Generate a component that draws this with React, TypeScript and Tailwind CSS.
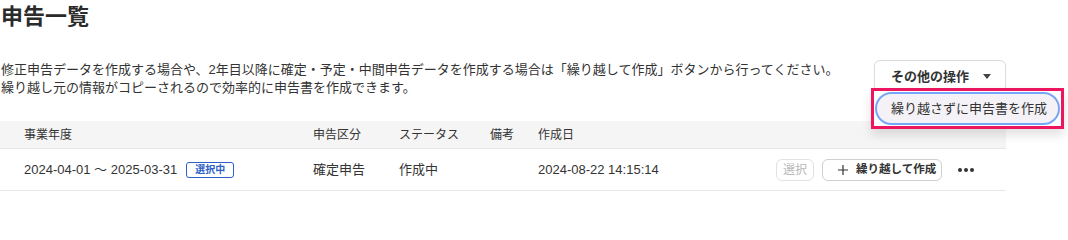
import React from "react";

const font = { fontFamily: '"Liberation Sans", "Noto Sans CJK JP", sans-serif' };

export default function App() {
  return (
    <div className="w-[1068px] h-[233px] bg-white text-[#333333] overflow-hidden" style={font}>
      <div className="w-[1006px]">
        <h1 className="text-[22px] leading-[33px] font-bold text-[#2b2b2b] pl-[1px]">申告一覧</h1>

        <div className="mt-[27px] flex items-start justify-between">
          <p className="text-[13px] leading-[18px] mt-[1px] pl-[1px]">
            修正申告データを作成する場合や、2年目以降に確定・予定・中間申告データを作成する場合は「繰り越して作成」ボタンから行ってください。
            <br />
            繰り越し元の情報がコピーされるので効率的に申告書を作成できます。
          </p>
          <div className="relative">
            <button className="h-[33px] w-[132px] pl-[16px] pr-[14px] flex items-center justify-between rounded-md border border-[#dcdcdc] bg-white text-[13px] font-bold shadow-[0_1px_2px_rgba(0,0,0,0.06)]">
              <span>その他の操作</span>
              <svg width="8" height="5" viewBox="0 0 8 5" className="ml-2">
                <path d="M0 0 L8 0 L4 5 Z" fill="#444" />
              </svg>
            </button>
            <div className="absolute left-[-3px] top-[28px] w-[193px] h-[41px] border-[3px] border-[#ee1560] bg-white p-[1px] shadow-[0_6px_10px_rgba(0,0,0,0.12)] z-10">
              <div className="h-full w-full rounded-full border-2 border-[#76a6f7] bg-[#f4f2f6] flex items-center pl-[14px] text-[13px] text-[#333] whitespace-nowrap">
                繰り越さずに申告書を作成
              </div>
            </div>
          </div>
        </div>

        <div className="mt-[24px]">
          <div className="h-[28px] bg-[#f6f5f5] border-b border-[#e6e6e6] flex items-center text-[12px] text-[#333]">
            <div className="w-[313px] pl-[24px]">事業年度</div>
            <div className="w-[86px]">申告区分</div>
            <div className="w-[91px]">ステータス</div>
            <div className="w-[48px]">備考</div>
            <div className="flex-1">作成日</div>
          </div>
          <div className="h-[42px] border-b border-[#e6e6e6] flex items-center text-[13px] text-[#333]">
            <div className="w-[313px] pl-[24px] flex items-center whitespace-nowrap">
              <span>2024-04-01 ～ 2025-03-31</span>
              <span className="ml-[9px] h-[16px] w-[48px] inline-flex items-center justify-center rounded-[3px] border border-[#2e5fc8] text-[#2e5fc8] text-[10px] font-bold leading-none">
                選択中
              </span>
            </div>
            <div className="w-[86px]">確定申告</div>
            <div className="w-[91px]">作成中</div>
            <div className="w-[48px]"></div>
            <div className="w-[238px]">2024-08-22 14:15:14</div>
            <div className="flex items-center">
              <button className="h-[22px] w-[38px] rounded-md border border-[#e2e2e2] text-[12px] text-[#b8b8b8] flex items-center justify-center">
                選択
              </button>
              <button className="ml-[8px] h-[22px] w-[120px] rounded-md border border-[#cfcfcf] text-[11.5px] font-bold text-[#333] flex items-center pl-[15px] whitespace-nowrap">
                <svg width="10" height="10" viewBox="0 0 10 10" className="mr-[8px]">
                  <path d="M5 0 V10 M0 5 H10" stroke="#333" strokeWidth="1.2" />
                </svg>
                繰り越して作成
              </button>
              <div className="ml-[16px] w-[16px] flex items-center justify-between">
                <span className="w-[4px] h-[4px] rounded-full bg-[#333]"></span>
                <span className="w-[4px] h-[4px] rounded-full bg-[#333]"></span>
                <span className="w-[4px] h-[4px] rounded-full bg-[#333]"></span>
              </div>
            </div>
          </div>
        </div>
      </div>
    </div>
  );
}
